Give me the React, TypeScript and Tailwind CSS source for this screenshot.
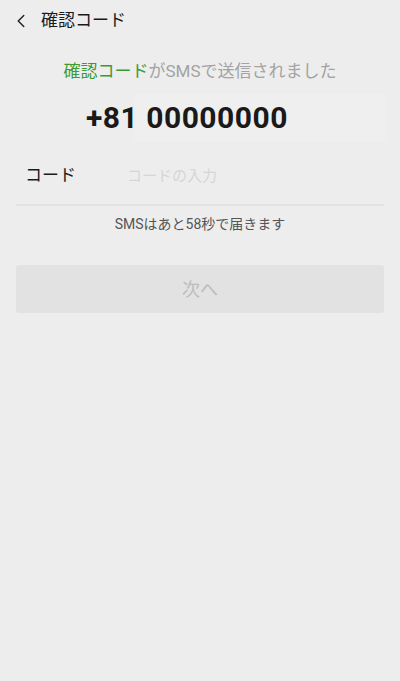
import { ChevronLeft } from 'lucide-react';

export default function App() {
  return (
    <div className="min-h-[681px] w-full bg-[#ededed] font-['Roboto','Noto_Sans_CJK_JP',sans-serif]">
      <div className="flex h-[42px] items-center pl-[10px]">
        <ChevronLeft className="h-[22px] w-[22px] text-[#222]" strokeWidth={1.6} />
        <span className="ml-[9px] text-[17px] text-[#1a1a1a]">確認コード</span>
      </div>

      <div className="mt-[17px] text-center text-[17px] leading-[24px] text-[#a3a3a3]">
        <span className="text-[#3c9a34]">確認コード</span>がSMSで送信されました
      </div>

      <div className="mt-[11px] flex justify-end pr-[15px]">
        <div className="flex h-[48px] w-[250px] items-center bg-[#efefef]">
          <span className="-ml-[49px] text-[30px] font-bold leading-none tracking-[0.5px] text-[#1a1a1a]">
            +81 00000000
          </span>
        </div>
      </div>

      <div className="mx-[16px] mt-[6px] flex h-[58px] items-center border-b-2 border-[#e2e2e2]">
        <span className="w-[111px] shrink-0 pl-[9px] text-[17px] text-[#1a1a1a]">コード</span>
        <input
          className="min-w-0 flex-1 bg-transparent text-[15px] text-[#333] outline-none placeholder:text-[#d6d6d6]"
          placeholder="コードの入力"
        />
      </div>

      <div className="mt-[8px] text-center text-[14px] leading-[20px] text-[#555]">
        SMSはあと58秒で届きます
      </div>

      <div className="mx-[16px] mt-[31px]">
        <button
          type="button"
          disabled
          className="flex h-[48px] w-full items-center justify-center rounded-[3px] bg-[#e2e2e2] text-[18px] text-[#bcbcbc]"
        >
          次へ
        </button>
      </div>
    </div>
  );
}
